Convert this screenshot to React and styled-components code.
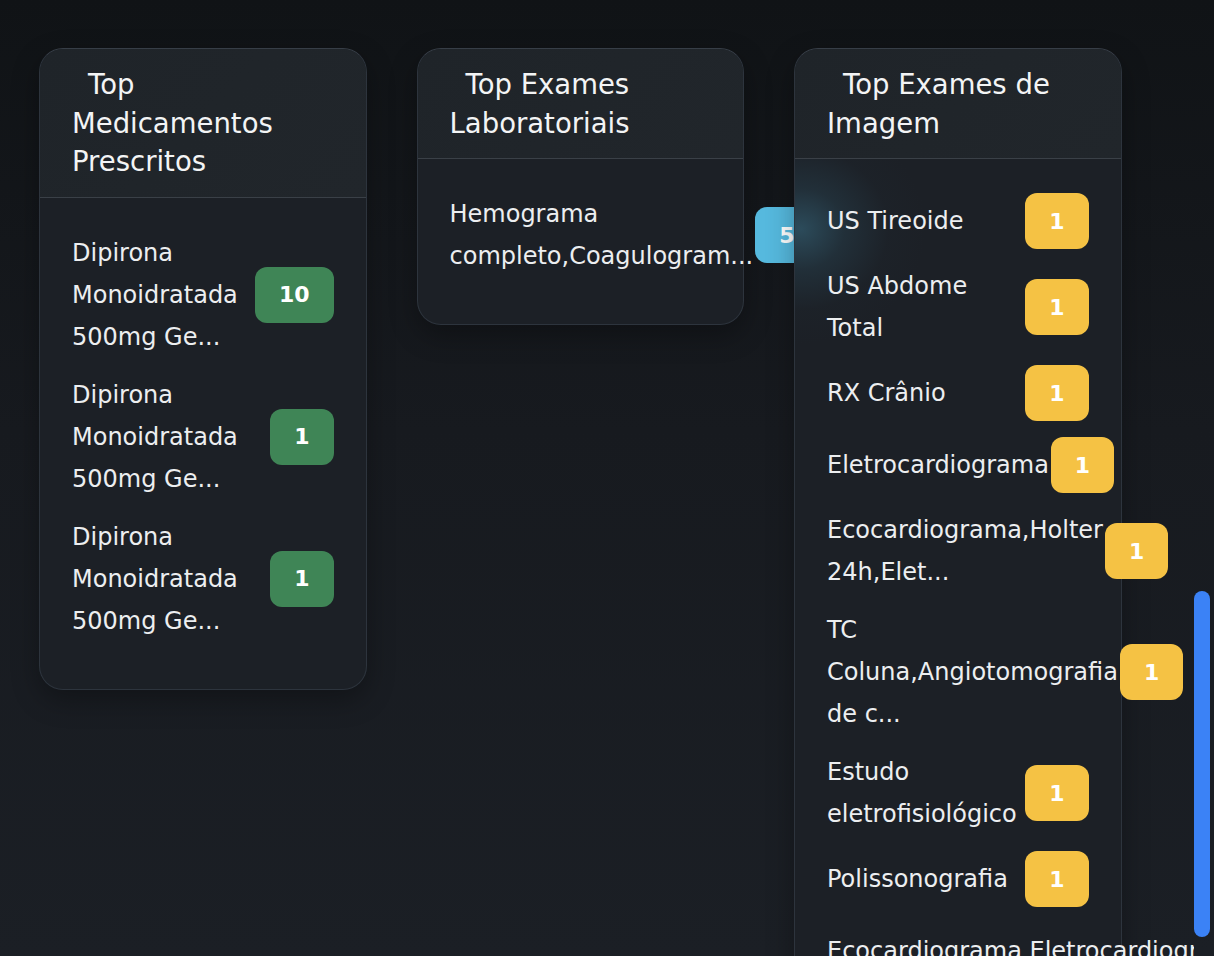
import React from 'react';
import styled, { createGlobalStyle } from 'styled-components';

const pageGradient = 'linear-gradient(180deg, #101316 0%, #171a1f 45%, #1b1f25 100%)';

const GlobalStyle = createGlobalStyle`
  html, body {
    margin: 0;
    height: 100%;
    overflow: hidden;
  }

  body {
    background: ${pageGradient};
    font-family: 'DejaVu Sans', Verdana, sans-serif;
    color: #eef0f2;
  }
`;

const medicamentos = [
  { name: 'Dipirona Monoidratada 500mg Generico', total: 10 },
  { name: 'Dipirona Monoidratada 500mg Generico', total: 1 },
  { name: 'Dipirona Monoidratada 500mg Generico', total: 1 },
];

const laboratoriais = [
  { name: 'Hemograma completo,Coagulograma,Glicemia', total: 5 },
];

const imagem = [
  { name: 'US Tireoide', total: 1 },
  { name: 'US Abdome Total', total: 1 },
  { name: 'RX Crânio', total: 1 },
  { name: 'Eletrocardiograma', total: 1 },
  { name: 'Ecocardiograma,Holter 24h,Eletrocardiograma', total: 1 },
  { name: 'TC Coluna,Angiotomografia de crânio', total: 1 },
  { name: 'Estudo eletrofisiológico', total: 1 },
  { name: 'Polissonografia', total: 1 },
  { name: 'Ecocardiograma,Eletrocardiograma', total: 1 },
];

const cut = (text) => (text.length > 30 ? `${text.slice(0, 30)}...` : text);

const RankCard = ({ title, items, tone, glow }) => (
  <Card>
    <CardHeader>
      <CardTitle>{title}</CardTitle>
    </CardHeader>
    <CardBody $glow={glow}>
      {items.map((item, i) => (
        <Row key={i}>
          <ItemName>{cut(item.name)}</ItemName>
          <Badge $tone={tone}>{item.total}</Badge>
        </Row>
      ))}
    </CardBody>
  </Card>
);

const App = () => (
  <>
    <GlobalStyle />
    <Page>
      <Grid>
        <RankCard title="Top Medicamentos Prescritos" items={medicamentos} tone="green" />
        <RankCard title="Top Exames Laboratoriais" items={laboratoriais} tone="cyan" />
        <RankCard title="Top Exames de Imagem" items={imagem} tone="yellow" glow />
      </Grid>
    </Page>
    <ScrollTrack>
      <ScrollThumb />
    </ScrollTrack>
  </>
);

export default App;

const tones = {
  green: '#3f8556',
  cyan: '#56b9de',
  yellow: '#f5c244',
};

const Page = styled.main`
  padding: 48px 39px;
`;

const Grid = styled.div`
  display: grid;
  grid-template-columns: repeat(3, 327.5px);
  column-gap: 50px;
  align-items: start;
`;

const Card = styled.section`
  border: 1px solid #2d343d;
  border-top-color: #373e47;
  border-radius: 24px;
  background: #1c2026;
  box-shadow: 0 10px 28px rgba(0, 0, 0, 0.3);
`;

const CardHeader = styled.header`
  padding: 16px 32px;
  border-bottom: 1px solid #3a4047;
  border-radius: 23px 23px 0 0;
  background: linear-gradient(135deg, #1f2429, #21262b);
`;

const CardTitle = styled.h3`
  margin: 0;
  font-size: 27.5px;
  font-weight: 400;
  line-height: 38.5px;
  text-indent: 16px;
  color: #f3f4f5;
`;

const CardBody = styled.div`
  padding: 34px 32px 31px;
  background: ${({ $glow }) =>
    $glow
      ? 'radial-gradient(ellipse 125px 115px at 6px 70px, rgba(48, 86, 104, 0.8) 0%, rgba(40, 66, 80, 0.45) 35%, rgba(32, 44, 54, 0.15) 70%, rgba(28, 32, 38, 0) 100%)'
      : 'none'};
`;

const Row = styled.div`
  display: flex;
  align-items: center;
  justify-content: space-between;
  gap: 2px;
  margin-bottom: 16px;
`;

const ItemName = styled.span`
  flex: 1;
  font-size: 24px;
  line-height: 42px;
  color: #eceef0;
`;

const Badge = styled.span`
  flex-shrink: 0;
  height: 56px;
  padding: 0 24px;
  display: flex;
  align-items: center;
  border-radius: 12px;
  background: ${({ $tone }) => tones[$tone]};
  color: #ffffff;
  font-size: 22px;
  font-weight: 700;
`;

const ScrollTrack = styled.div`
  position: fixed;
  top: 0;
  right: 0;
  bottom: 0;
  width: 20px;
  background: ${pageGradient};
`;

const ScrollThumb = styled.div`
  margin: 591px 4px 0 0;
  width: 16px;
  height: 346px;
  border-radius: 8px;
  background: #3b82f6;
`;
